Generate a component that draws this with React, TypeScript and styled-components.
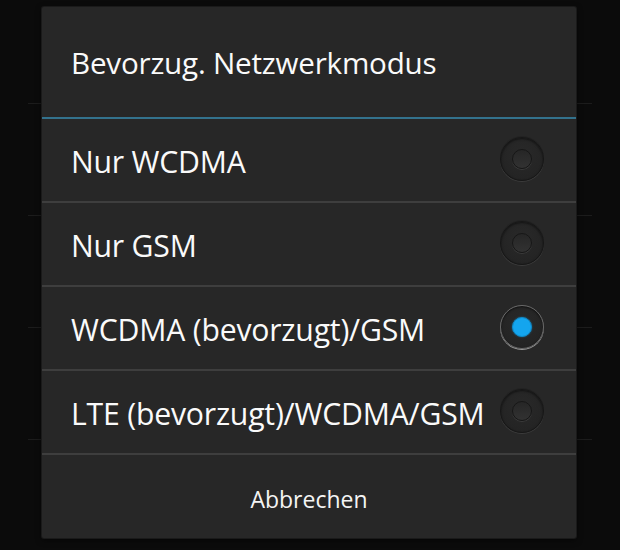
import React from "react";
import styled, { createGlobalStyle } from "styled-components";

const GlobalStyle = createGlobalStyle`
  html, body {
    margin: 0;
    padding: 0;
    background: #0b0b0b;
  }
  body {
    font-family: "Open Sans", "Noto Sans", sans-serif;
    -webkit-font-smoothing: antialiased;
  }
`;

const options = [
  "Nur WCDMA",
  "Nur GSM",
  "WCDMA (bevorzugt)/GSM",
  "LTE (bevorzugt)/WCDMA/GSM",
];

export default function App() {
  const selected = 2;
  return (
    <>
      <GlobalStyle />
      <Screen>
        <Backdrop>
          {[0, 1, 2, 3, 4].map((i) => (
            <BackdropRow key={i} first={i === 0} />
          ))}
        </Backdrop>
        <Dialog>
          <Title>Bevorzug. Netzwerkmodus</Title>
          <TitleLine />
          <List>
            {options.map((label, i) => (
              <Row key={label}>
                <RowLabel>{label}</RowLabel>
                <Radio checked={i === selected}>
                  <RadioDot checked={i === selected} />
                </Radio>
              </Row>
            ))}
          </List>
          <Footer>
            <CancelButton>Abbrechen</CancelButton>
          </Footer>
        </Dialog>
      </Screen>
    </>
  );
}

const Screen = styled.div`
  position: relative;
  width: 620px;
  height: 550px;
  overflow: hidden;
  background: #0b0b0b;
`;

const Backdrop = styled.div`
  display: flex;
  flex-direction: column;
  padding: 0 28px;
`;

const BackdropRow = styled.div<{ first?: boolean }>`
  height: ${(p) => (p.first ? 103 : 111)}px;
  border-bottom: 1px solid #1c1c1c;
`;

const Dialog = styled.div`
  position: absolute;
  left: 42px;
  top: 7px;
  width: 534px;
  height: 531px;
  display: flex;
  flex-direction: column;
  background: #272727;
  border-radius: 2px;
  box-shadow: 0 0 0 1px #1a1a1a, 0 2px 6px rgba(0, 0, 0, 0.6);
`;

const Title = styled.div`
  height: 110px;
  display: flex;
  align-items: center;
  padding: 0 0 0 29px;
  box-sizing: border-box;
  font-size: 29.6px;
  color: #fafafa;
  letter-spacing: -0.2px;
`;

const TitleLine = styled.div`
  height: 2px;
  background: #33728d;
`;

const List = styled.div`
  display: flex;
  flex-direction: column;
`;

const Row = styled.div`
  height: 82px;
  display: flex;
  align-items: center;
  justify-content: space-between;
  padding: 0 32px 0 29px;
  border-bottom: 2px solid #3e3e3e;
`;

const RowLabel = styled.span`
  font-size: 30.2px;
  color: #fafafa;
  letter-spacing: -0.2px;
  margin-top: 2px;
`;

const Radio = styled.div<{ checked?: boolean }>`
  flex-shrink: 0;
  width: 44px;
  height: 44px;
  border-radius: 50%;
  display: flex;
  align-items: center;
  justify-content: center;
  box-sizing: border-box;
  margin-top: -2px;
  background: radial-gradient(circle at 50% 40%, #292929 0%, #242424 70%, #202020 100%);
  border: 1px solid ${(p) => (p.checked ? "#6a6a6a" : "#171717")};
  box-shadow: ${(p) =>
    p.checked
      ? "0 1px 0 #9a9a9a, inset 0 1px 2px rgba(0,0,0,0.6)"
      : "0 1px 0 #3c3c3c, 0 -1px 0 #222, inset 0 1px 2px rgba(0,0,0,0.5)"};
`;

const RadioDot = styled.div<{ checked?: boolean }>`
  width: 20px;
  height: 20px;
  border-radius: 50%;
  box-sizing: border-box;
  background: ${(p) =>
    p.checked ? "#14a5ee" : "linear-gradient(#262626, #323232)"};
  border: 1px solid ${(p) => (p.checked ? "#0f88c6" : "#171717")};
  box-shadow: ${(p) =>
    p.checked ? "0 0 2px rgba(20,165,238,0.5)" : "0 1px 0 #3c3c3c"};
`;

const Footer = styled.div`
  flex: 1;
  display: flex;
  align-items: center;
  justify-content: center;
`;

const CancelButton = styled.div`
  font-size: 23px;
  color: #f4f4f4;
  margin-top: 4px;
  cursor: pointer;
`;
